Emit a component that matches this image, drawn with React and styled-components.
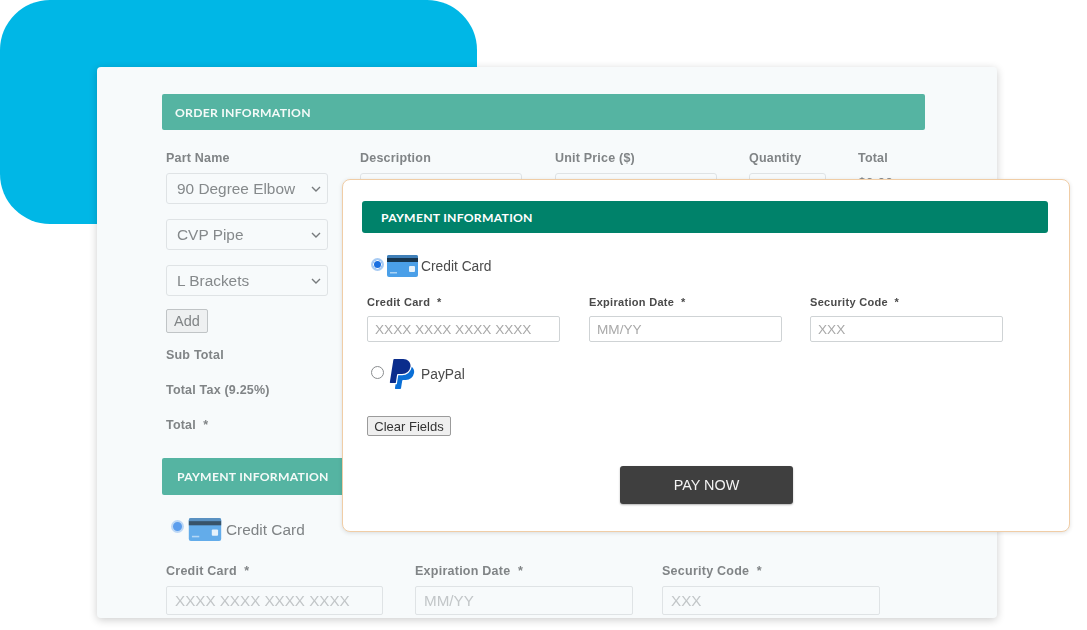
import styled, { createGlobalStyle } from 'styled-components';

const sans = '"Liberation Sans", Arial, sans-serif';

const chevron =
  "url(\"data:image/svg+xml,%3Csvg xmlns='http://www.w3.org/2000/svg' width='10' height='6' viewBox='0 0 10 6'%3E%3Cpath d='M1 1l4 4 4-4' fill='none' stroke='%23777b7d' stroke-width='1.4'/%3E%3C/svg%3E\")";

export default function App() {
  return (
    <Stage>
      <GlobalStyle />
      <Blob />
      <BackPanel>
        <BackHeader>Order Information</BackHeader>
        <OrderTable>
          <OrderColumn $width={194}>
            <BackLabel>Part Name</BackLabel>
            <BackSelect defaultValue="90 Degree Elbow">
              <option>90 Degree Elbow</option>
            </BackSelect>
            <BackSelect defaultValue="CVP Pipe">
              <option>CVP Pipe</option>
            </BackSelect>
            <BackSelect defaultValue="L Brackets">
              <option>L Brackets</option>
            </BackSelect>
            <AddButton type="button">Add</AddButton>
          </OrderColumn>
          <OrderColumn $width={195}>
            <BackLabel>Description</BackLabel>
            <BackInput $width={162} />
          </OrderColumn>
          <OrderColumn $width={194}>
            <BackLabel>Unit Price ($)</BackLabel>
            <BackInput $width={162} />
          </OrderColumn>
          <OrderColumn $width={109}>
            <BackLabel>Quantity</BackLabel>
            <BackInput $width={77} />
          </OrderColumn>
          <OrderColumn $width={60}>
            <BackLabel>Total</BackLabel>
            <BackValue>$0.00</BackValue>
          </OrderColumn>
        </OrderTable>
        <Totals>
          <BackLabel>Sub Total</BackLabel>
          <BackLabel>Total Tax (9.25%)</BackLabel>
          <BackLabel>Total&nbsp; *</BackLabel>
        </Totals>
        <BackHeader $second>Payment Information</BackHeader>
        <BackMethod>
          <BackRadio type="radio" name="back-method" defaultChecked />
          <CardIcon width="34" height="23" $faded />
          Credit Card
        </BackMethod>
        <BackFields>
          <Field>
            <BackFieldLabel>Credit Card&nbsp; *</BackFieldLabel>
            <BackFieldInput $width={217} placeholder="XXXX XXXX XXXX XXXX" />
          </Field>
          <Field>
            <BackFieldLabel>Expiration Date&nbsp; *</BackFieldLabel>
            <BackFieldInput $width={218} placeholder="MM/YY" />
          </Field>
          <Field>
            <BackFieldLabel>Security Code&nbsp; *</BackFieldLabel>
            <BackFieldInput $width={218} placeholder="XXX" />
          </Field>
        </BackFields>
      </BackPanel>

      <FrontCard>
        <FrontHeader>Payment Information</FrontHeader>
        <Method>
          <Radio type="radio" name="front-method" defaultChecked />
          <CardIcon width="31" height="22" />
          Credit Card
        </Method>
        <FrontFields>
          <Field>
            <FrontLabel>Credit Card&nbsp; *</FrontLabel>
            <FrontInput placeholder="XXXX XXXX XXXX XXXX" />
          </Field>
          <Field>
            <FrontLabel>Expiration Date&nbsp; *</FrontLabel>
            <FrontInput placeholder="MM/YY" />
          </Field>
          <Field>
            <FrontLabel>Security Code&nbsp; *</FrontLabel>
            <FrontInput placeholder="XXX" />
          </Field>
        </FrontFields>
        <PaypalMethod>
          <Radio type="radio" name="front-method" />
          <PaypalIcon />
          PayPal
        </PaypalMethod>
        <ClearButton type="button">Clear Fields</ClearButton>
        <PayRow>
          <PayButton type="button">PAY NOW</PayButton>
        </PayRow>
      </FrontCard>
    </Stage>
  );
}

function CardIcon({ width, height, $faded }) {
  return (
    <CardSvg viewBox="0 0 31 22" width={width} height={height} $faded={$faded}>
      <rect x="0" y="0" width="31" height="22" rx="2" fill="#4a9fe8" />
      <path d="M0 2a2 2 0 0 1 2-2h27a2 2 0 0 1 2 2v1H0z" fill="#3f7fb8" />
      <rect x="0" y="3" width="31" height="4" fill="#17364f" />
      <rect x="22" y="11" width="6" height="6" rx="1" fill="#e4f1fb" />
      <rect x="3" y="17" width="7" height="1.5" fill="#a9d3f5" />
    </CardSvg>
  );
}

function PaypalIcon() {
  return (
    <PaypalSvg viewBox="0 0 24 24" width="30" height="30">
      <path
        fill="#0a6fd6"
        d="M19.79 6.142c-.01.087-.01.175-.023.261a7.76 7.76 0 0 1-7.695 6.598H9.007l-.283 1.795-.013.083-.692 4.39-.134.843-.014.088H6.86l-.497 3.15a.562.562 0 0 0 .555.65h3.612c.34 0 .63-.249.683-.585l.952-6.031a.692.692 0 0 1 .683-.584h2.126a6.793 6.793 0 0 0 6.707-5.752c.306-1.95-.466-3.744-1.89-4.906z"
      />
      <path
        fill="#0b2d8c"
        d="M7.016 19.198h-4.2a.562.562 0 0 1-.555-.65L5.093.584A.692.692 0 0 1 5.776 0h7.222c3.417 0 5.904 2.488 5.846 5.5-.006.25-.027.5-.066.747A6.794 6.794 0 0 1 12.071 12H8.743a.69.69 0 0 0-.682.583l-.325 2.056-.013.083-.692 4.39-.015.087z"
      />
    </PaypalSvg>
  );
}

const GlobalStyle = createGlobalStyle`
  html, body {
    margin: 0;
    height: 100%;
    background: #fff;
    overflow: hidden;
    font-family: ${sans};
  }
`;

const Stage = styled.div`
  position: relative;
  width: 1087px;
  height: 630px;
  padding: 67px 0 0 97px;
  box-sizing: border-box;
  overflow: hidden;
  filter: blur(0.3px);
`;

const Blob = styled.div`
  position: absolute;
  left: 0;
  top: 0;
  width: 477px;
  height: 224px;
  background: #00b7e6;
  border-radius: 50px;
`;

const BackPanel = styled.section`
  position: relative;
  width: 900px;
  height: 551px;
  box-sizing: border-box;
  padding: 27px 72px 0 65px;
  background: #f7fafb;
  border-radius: 4px;
  box-shadow: 0 2px 8px rgba(0, 0, 0, 0.2);
  overflow: hidden;
`;

const BackHeader = styled.h2`
  width: ${(p) => (p.$second ? '300px' : '763px')};
  height: ${(p) => (p.$second ? '37px' : '36px')};
  margin: ${(p) => (p.$second ? '26px 0 0' : '0')};
  padding: ${(p) => (p.$second ? '0 0 0 15px' : '1px 0 0 13px')};
  box-sizing: border-box;
  display: flex;
  align-items: center;
  background: #55b4a2;
  border-radius: 2px;
  color: #f4faf8;
  font: 700 12.2px 'Lato', sans-serif;
  letter-spacing: 0.25px;
  text-transform: uppercase;
`;

const OrderTable = styled.div`
  display: flex;
  padding: 21px 0 0 4px;
`;

const OrderColumn = styled.div`
  width: ${(p) => p.$width}px;
  flex: none;
  display: flex;
  flex-direction: column;
  align-items: flex-start;
`;

const BackLabel = styled.div`
  color: #808486;
  font: 700 12.5px/14px ${sans};
  letter-spacing: 0.2px;
`;

const BackSelect = styled.select`
  width: 162px;
  height: 31px;
  margin: 8px 0 7px;
  padding-left: 10px;
  box-sizing: border-box;
  appearance: none;
  background: #f7fafb ${chevron} no-repeat right 6px center;
  border: 1px solid #dfe3e5;
  border-radius: 3px;
  color: #85898b;
  font: 15.4px ${sans};

  & + & {
    margin-top: 8px;
  }
`;

const AddButton = styled.button`
  width: 42px;
  height: 24px;
  margin-top: 6px;
  padding: 0;
  background: #eef0f1;
  border: 1px solid #c0c4c6;
  border-radius: 2px;
  color: #808486;
  font: 14.5px ${sans};
`;

const BackInput = styled.input`
  width: ${(p) => p.$width}px;
  height: 30px;
  margin-top: 8px;
  box-sizing: border-box;
  background: #f7fafb;
  border: 1px solid #dfe3e5;
  border-radius: 3px;
`;

const BackValue = styled.div`
  margin-top: 10px;
  color: #85898b;
  font: 14px/16px ${sans};
`;

const Totals = styled.div`
  display: flex;
  flex-direction: column;
  gap: 21px;
  padding: 15px 0 0 4px;
`;

const BackMethod = styled.div`
  display: flex;
  align-items: center;
  height: 23px;
  margin: 23px 0 0 9px;
  color: #7f8385;
  font: 15.4px ${sans};
`;

const Radio = styled.input`
  appearance: none;
  flex: none;
  width: 13px;
  height: 13px;
  margin: 0 3px 3px 0;
  box-sizing: border-box;
  background: #fff;
  border: 1px solid #8a8d8f;
  border-radius: 50%;

  &:checked {
    background: #1a6fe0;
    border: 2px solid #a8cbf3;
    box-shadow: inset 0 0 0 1px #fff;
  }
`;

const BackRadio = styled(Radio)`
  margin: 0 4px 6px 0;

  &:checked {
    background: #5b9ded;
    border: 2px solid #bcd7f5;
    box-shadow: none;
  }
`;

const CardSvg = styled.svg`
  flex: none;
  margin-right: ${(p) => (p.$faded ? 4 : 3)}px;
  opacity: ${(p) => (p.$faded ? 0.85 : 1)};
`;

const BackFields = styled.div`
  display: grid;
  grid-template-columns: 249px 247px 218px;
  padding: 23px 0 0 4px;
`;

const Field = styled.div`
  display: flex;
  flex-direction: column;
`;

const BackFieldLabel = styled.label`
  color: #808486;
  font: 700 12.5px/14px ${sans};
  letter-spacing: 0.25px;
`;

const BackFieldInput = styled.input`
  width: ${(p) => p.$width}px;
  height: 29px;
  margin-top: 8px;
  padding: 0 8px;
  box-sizing: border-box;
  background: #f7fafb;
  border: 1px solid #dfe3e5;
  border-radius: 2px;
  font: 15.2px ${sans};

  &::placeholder {
    color: #c2c6c8;
    opacity: 1;
  }
`;

const FrontCard = styled.section`
  position: absolute;
  left: 342px;
  top: 179px;
  width: 728px;
  height: 353px;
  box-sizing: border-box;
  padding: 21px 21px 0 19px;
  background: #fff;
  border: 1px solid #f0cda6;
  border-radius: 8px;
  box-shadow: 0 1px 4px rgba(0, 0, 0, 0.12);
`;

const FrontHeader = styled.h2`
  height: 32px;
  margin: 0;
  padding: 1px 0 0 19px;
  box-sizing: border-box;
  display: flex;
  align-items: center;
  background: #00826a;
  border-radius: 3px;
  color: #fff;
  font: 700 12.2px 'Lato', sans-serif;
  letter-spacing: 0.25px;
  text-transform: uppercase;
`;

const Method = styled.div`
  display: flex;
  align-items: center;
  height: 22px;
  margin: 22px 0 0 9px;
  color: #4a4a4a;
  font: 13.8px ${sans};
`;

const PaypalMethod = styled(Method)`
  height: 30px;
  margin-top: 17px;
`;

const PaypalSvg = styled.svg`
  flex: none;
  margin-right: 4px;
`;

const FrontFields = styled.div`
  display: grid;
  grid-template-columns: 222px 221px 193px;
  padding: 19px 0 0 5px;
`;

const FrontLabel = styled.label`
  color: #4a4a4a;
  font: 700 11px/13px ${sans};
  letter-spacing: 0.3px;
`;

const FrontInput = styled.input`
  width: 193px;
  height: 26px;
  margin-top: 7px;
  padding: 0 7px;
  box-sizing: border-box;
  background: #fff;
  border: 1px solid #cfd3d5;
  border-radius: 2px;
  font: 13.6px ${sans};

  &::placeholder {
    color: #a9a9a9;
    opacity: 1;
  }
`;

const ClearButton = styled.button`
  display: block;
  width: 84px;
  height: 20px;
  margin: 27px 0 0 5px;
  padding: 0;
  background: #efefef;
  border: 1px solid #9b9b9b;
  border-radius: 2px;
  color: #333;
  font: 13px ${sans};
`;

const PayRow = styled.div`
  display: flex;
  justify-content: center;
  padding: 30px 0 0 0;
`;

const PayButton = styled.button`
  width: 173px;
  height: 38px;
  margin-left: 3px;
  padding: 0;
  background: #3f3f3f;
  border: 0;
  border-radius: 3px;
  box-shadow: 0 1px 2px rgba(0, 0, 0, 0.3);
  color: #f4f4f4;
  font: 14.4px ${sans};
`;
